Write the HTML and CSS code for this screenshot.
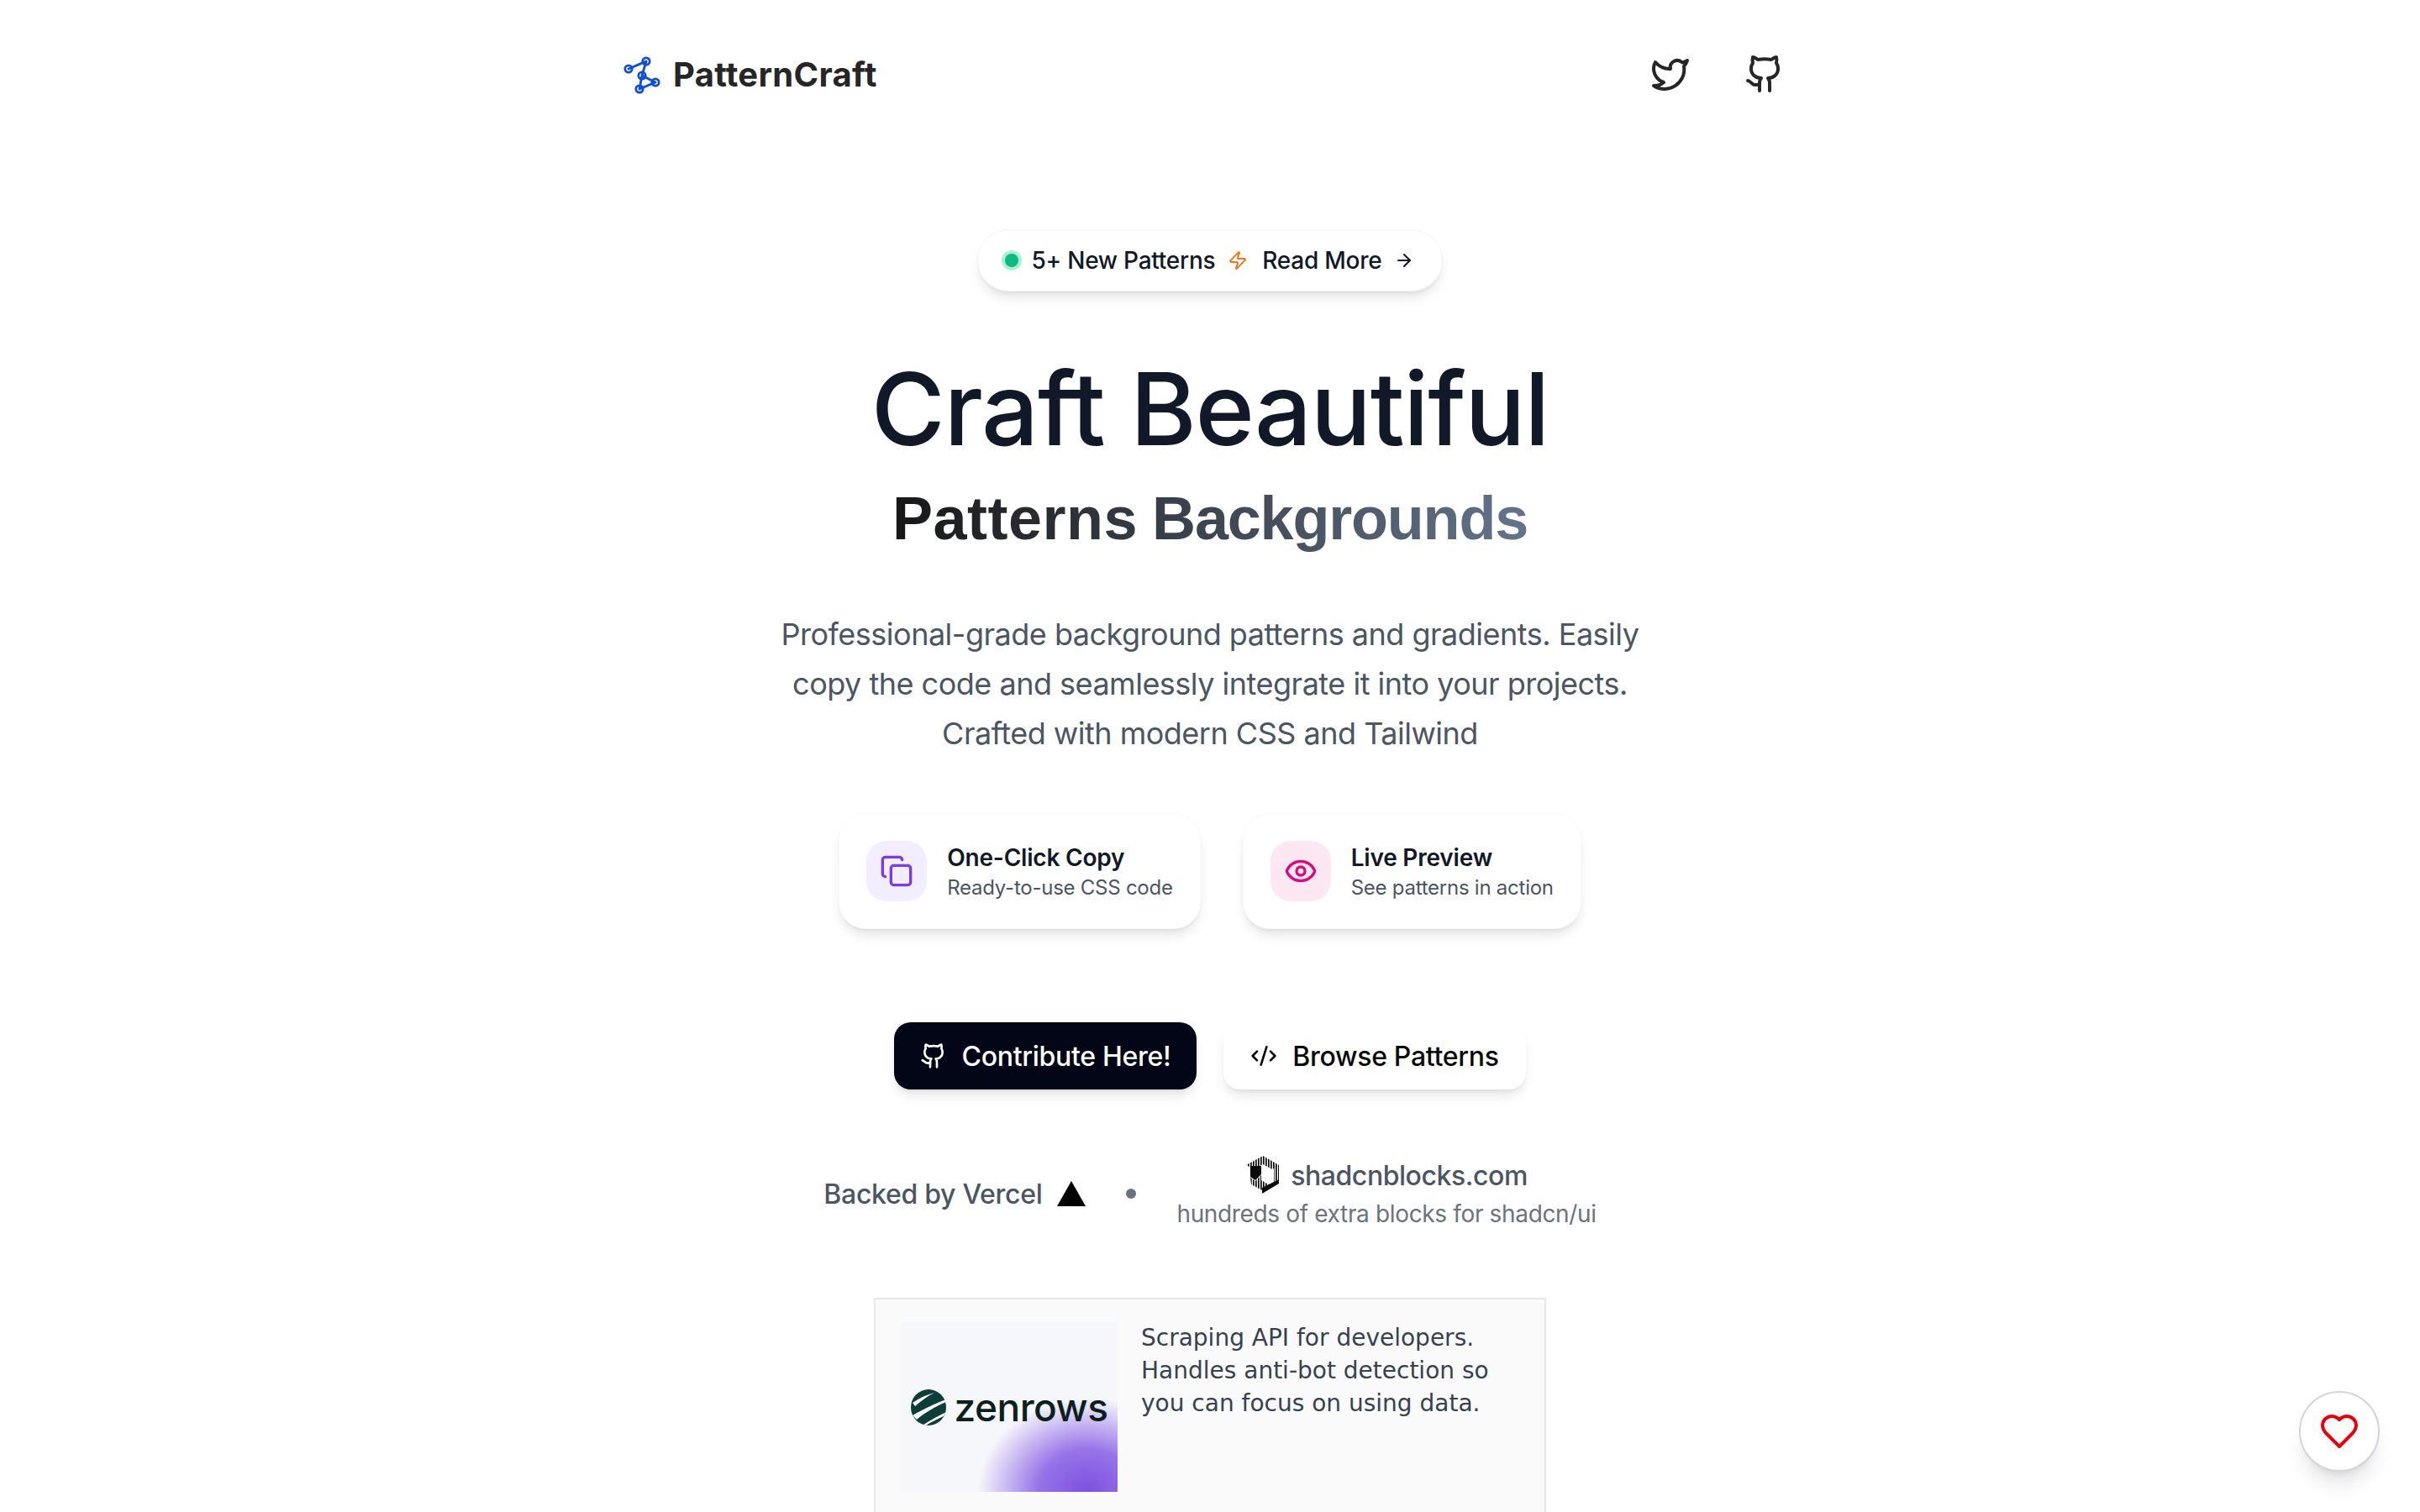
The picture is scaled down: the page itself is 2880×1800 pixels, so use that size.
FILE: index.html
```html
<!DOCTYPE html>
<html lang="en">
<head>
<meta charset="utf-8">
<title>PatternCraft</title>
<link rel="stylesheet" href="styles.css">
</head>
<body>
<header class="header">
  <a class="brand">
    <svg class="brand-icon" viewBox="0 0 48 48">
      <path d="M8 18 29 9 24 26 40 34 21 42 24 26"/>
      <circle cx="8" cy="18" r="4.200"/><circle cx="29" cy="9" r="4.200"/><circle cx="24" cy="26" r="4.200"/><circle cx="40" cy="34" r="4.200"/><circle cx="21" cy="42" r="4.200"/>
    </svg>
    <span class="brand-name">PatternCraft</span>
  </a>
  <nav class="social">
    <svg class="social-icon" viewBox="0 0 24 24"><path d="M22 4s-.7 2.1-2 3.4c1.600 10-9.400 17.300-18 11.600 2.200.1 4.400-.6 6-2C3 15.500.5 9.600 3 5c2.200 2.600 5.600 4.100 9 4-.9-4.200 4-6.600 7-3.800 1.100 0 3-1.200 3-1.200z"/></svg>
    <svg class="social-icon" viewBox="0 0 24 24"><path d="M15 22v-4a4.800 4.800 0 0 0-1-3.500c3 0 6-2 6-5.500.08-1.250-.27-2.480-1-3.500.28-1.150.28-2.350 0-3.500 0 0-1 0-3 1.500-2.640-.5-5.360-.5-8 0C6 2 5 2 5 2c-.3 1.150-.3 2.350 0 3.500A5.403 5.403 0 0 0 4 9c0 3.500 3 5.500 6 5.500-.39.49-.68 1.050-.85 1.650-.17.6-.22 1.230-.15 1.850v4"/><path d="M9 18c-4.510 2-5-2-7-2"/></svg>
  </nav>
</header>
<main class="main">
  <div class="pill">
    <span class="pill-dot"></span>
    <span>5+ New Patterns</span>
    <svg class="pill-zap" viewBox="0 0 24 24"><path d="M4 14a1 1 0 0 1-.78-1.630l9.900-10.200a.5.5 0 0 1 .86.46l-1.920 6.020A1 1 0 0 0 13 10h7a1 1 0 0 1 .78 1.630l-9.900 10.200a.5.5 0 0 1-.86-.46l1.920-6.020A1 1 0 0 0 11 14z"/></svg>
    <span class="pill-more">Read More</span>
    <svg class="pill-arrow" viewBox="0 0 24 24"><path d="M5 12h14"/><path d="m12 5 7 7-7 7"/></svg>
  </div>
  <h1 class="title">Craft Beautiful</h1>
  <h2 class="subtitle"><span class="subtitle-first">Patterns</span> <span class="subtitle-second">Backgrounds</span></h2>
  <p class="lead">Professional-grade background patterns and gradients. Easily<br>copy the code and seamlessly integrate it into your projects.<br>Crafted with modern CSS and Tailwind</p>
  <div class="features">
    <div class="feature">
      <span class="feature-icon feature-icon-violet">
        <svg viewBox="0 0 24 24"><rect width="14" height="14" x="8" y="8" rx="2"/><path d="M4 16c-1.100 0-2-.9-2-2V4c0-1.100.9-2 2-2h10c1.100 0 2 .9 2 2"/></svg>
      </span>
      <div class="feature-text">
        <div class="feature-title">One-Click Copy</div>
        <div class="feature-sub">Ready-to-use CSS code</div>
      </div>
    </div>
    <div class="feature">
      <span class="feature-icon feature-icon-pink">
        <svg viewBox="0 0 24 24"><path d="M2.062 12.348a1 1 0 0 1 0-.696 10.750 10.750 0 0 1 19.876 0 1 1 0 0 1 0 .696 10.750 10.750 0 0 1-19.876 0"/><circle cx="12" cy="12" r="3"/></svg>
      </span>
      <div class="feature-text">
        <div class="feature-title">Live Preview</div>
        <div class="feature-sub">See patterns in action</div>
      </div>
    </div>
  </div>
  <div class="actions">
    <a class="btn btn-dark">
      <svg viewBox="0 0 24 24"><path d="M15 22v-4a4.800 4.800 0 0 0-1-3.500c3 0 6-2 6-5.500.08-1.250-.27-2.480-1-3.500.28-1.150.28-2.350 0-3.500 0 0-1 0-3 1.500-2.640-.5-5.360-.5-8 0C6 2 5 2 5 2c-.3 1.150-.3 2.350 0 3.500A5.403 5.403 0 0 0 4 9c0 3.500 3 5.500 6 5.500-.39.49-.68 1.050-.85 1.650-.17.6-.22 1.230-.15 1.850v4"/><path d="M9 18c-4.510 2-5-2-7-2"/></svg>
      Contribute Here!
    </a>
    <a class="btn btn-light">
      <svg viewBox="0 0 24 24"><path d="m18 16 4-4-4-4"/><path d="m6 8-4 4 4 4"/><path d="m14.500 4-5 16"/></svg>
      Browse Patterns
    </a>
  </div>
  <div class="backers">
    <div class="vercel">
      <span>Backed by Vercel</span>
      <svg class="vercel-mark" viewBox="0 0 34 30"><path d="M17 0 34 30H0z"/></svg>
    </div>
    <span class="backer-dot"></span>
    <div class="blocks">
      <div class="blocks-top">
        <svg class="blocks-mark" viewBox="0 0 42 48">
          <defs><pattern id="stripes" width="3" height="3" patternUnits="userSpaceOnUse"><rect width="1.700" height="3" fill="#0a0a0a"/></pattern></defs>
          <path d="M1 12 21 1 40 12 32 17 21 11 10 17Z" fill="url(#stripes)"/>
          <path d="M6 13 19 13V23L12 30 6 26Z" fill="#0a0a0a"/>
          <path d="M6 27 12 31 19 24V30L31 37 20 42 7 35Z" fill="url(#stripes)"/>
          <path d="M34 14 40 12V32L34 35Z" fill="url(#stripes)"/>
          <path d="M20 46 40 34V29L30 34 20 39Z" fill="#0a0a0a"/>
        </svg>
        <span class="blocks-name">shadcnblocks.com</span>
      </div>
      <div class="blocks-sub">hundreds of extra blocks for shadcn/ui</div>
    </div>
  </div>
  <aside class="sponsor">
    <div class="sponsor-image">
      <svg class="zen-mark" viewBox="0 0 42 43">
        <ellipse cx="21" cy="21.500" rx="21" ry="21.500" fill="#0d3d38"/>
        <path d="M2 16C10 10 20 6 28 4 20 8 12 14 5 20Z M2 31C14 24 30 16 42 12V15C30 20 16 28 7 36Z M15 42C24 36 34 31 42 27L39 32C32 35 24 39 18 43Z" fill="#f6f7fa"/>
      </svg>
      <span class="zen-name">zenrows</span>
    </div>
    <p class="sponsor-text">Scraping API for developers. Handles anti-bot detection so you can focus on using data.</p>
  </aside>
</main>
<button class="like" aria-label="Like">
  <svg viewBox="0 0 24 24"><path d="M19 14c1.490-1.460 3-3.210 3-5.500A5.500 5.500 0 0 0 16.500 3c-1.760 0-3 .5-4.500 2-1.500-1.500-2.740-2-4.500-2A5.500 5.500 0 0 0 2 8.500c0 2.300 1.500 4.050 3 5.500l7 7Z"/></svg>
</button>
</body>
</html>
```
FILE: styles.css
```css
* { box-sizing: border-box; }
html, body { margin: 0; padding: 0; }
body {
  background: #fff;
  color: #111827;
  font-family: Inter, "Liberation Sans", sans-serif;
  height: 1800px;
  overflow: hidden;
}
svg { fill: none; stroke: currentColor; stroke-width: 2; stroke-linecap: round; stroke-linejoin: round; flex: none; }

.header {
  width: 1440px;
  height: 176px;
  margin: 0 auto;
  padding: 0 36px 0 20px;
  display: flex;
  align-items: center;
  justify-content: space-between;
}
.brand { display: flex; align-items: center; gap: 13px; }
.brand-icon { width: 48px; height: 48px; stroke: #0f4fd0; stroke-width: 2.8; }
.brand-name { font-size: 40px; font-weight: 700; letter-spacing: 0.3px; color: #262626; }
.social { display: flex; gap: 64px; }
.social-icon { width: 48px; height: 48px; stroke: #262626; }

.main { display: flex; flex-direction: column; align-items: center; }

.pill {
  margin-top: 97px;
  height: 74px;
  padding: 0 33px 0 28px;
  display: flex;
  align-items: center;
  gap: 15px;
  border-radius: 37px;
  border: 1px solid #f3f4f6;
  background: #fff;
  font-size: 28px;
  font-weight: 500;
  letter-spacing: -0.25px;
  color: #111827;
  box-shadow: 0 10px 15px -3px rgba(0,0,0,.1), 0 4px 6px -4px rgba(0,0,0,.1);
}
.pill-dot {
  width: 16px;
  height: 16px;
  margin: 0 1px 0 4px;
  border-radius: 50%;
  background: #10b981;
  box-shadow: 0 0 0 4px #a7f3d0;
}
.pill-more { margin-left: 2px; }
.pill-zap { width: 24px; height: 24px; stroke: #f97316; }
.pill-arrow { width: 24px; height: 24px; stroke: #111827; }

.title {
  margin: 65px 0 0;
  font-size: 120px;
  line-height: 1.25;
  font-weight: 500;
  letter-spacing: -1.3px;
  color: #111827;
}
.subtitle {
  margin: 10px 0 0;
  font-family: "Liberation Sans", Arial, sans-serif;
  font-size: 72px;
  line-height: 1.25;
  font-weight: 700;
  word-spacing: -3px;
  background: linear-gradient(90deg, #171717, #64748b);
  -webkit-background-clip: text;
  background-clip: text;
  color: transparent;
}
.subtitle-first { letter-spacing: 0.5px; }
.subtitle-second { letter-spacing: -1.2px; }
.lead {
  margin: 64px 0 0;
  font-size: 36px;
  line-height: 59px;
  letter-spacing: -0.5px;
  color: #4b5563;
  text-align: center;
}

.features { margin-top: 65px; display: flex; gap: 50px; }
.feature {
  height: 138px;
  padding: 0 32px;
  display: flex;
  align-items: center;
  gap: 24px;
  background: #fff;
  border: 1px solid #f9fafb;
  border-radius: 32px;
  box-shadow: 0 10px 15px -3px rgba(0,0,0,.1), 0 4px 6px -4px rgba(0,0,0,.1);
}
.feature-icon {
  width: 72px;
  height: 72px;
  border-radius: 24px;
  display: flex;
  align-items: center;
  justify-content: center;
}
.feature-icon svg { width: 40px; height: 40px; }
.feature-icon-violet { background: #f3eeff; color: #7c3aed; }
.feature-icon-pink { background: #fce7f3; color: #db0a7b; }
.feature-title { font-size: 28px; line-height: 40px; font-weight: 600; letter-spacing: -0.2px; color: #111827; }
.feature-sub { font-size: 24px; line-height: 32px; letter-spacing: -0.25px; color: #4b5563; }

.actions { margin-top: 111px; display: flex; gap: 32px; }
.btn {
  width: 360px;
  height: 80px;
  display: flex;
  align-items: center;
  justify-content: center;
  gap: 18px;
  border-radius: 20px;
  font-size: 32px;
  font-weight: 500;
  letter-spacing: -0.3px;
  box-shadow: 0 10px 15px -3px rgba(0,0,0,.1), 0 4px 6px -4px rgba(0,0,0,.1);
}
.btn svg { width: 32px; height: 32px; }
.btn-dark { background: #020617; color: #fff; }
.btn-light { background: #fff; color: #0a0a0a; }

.backers { margin-top: 78px; display: flex; align-items: center; gap: 48px; }
.vercel { display: flex; align-items: center; gap: 18px; font-size: 32px; font-weight: 500; letter-spacing: -0.3px; color: #4b5563; }
.vercel-mark { width: 34px; height: 30px; fill: #000; stroke: none; }
.backer-dot { width: 12px; height: 12px; border-radius: 50%; background: #6b7280; }
.blocks { display: flex; flex-direction: column; align-items: center; }
.blocks-top { display: flex; align-items: center; gap: 12px; font-size: 32px; font-weight: 500; letter-spacing: -0.45px; color: #4b5563; }
.blocks-mark { width: 42px; height: 48px; stroke: none; }
.blocks-sub { font-size: 28px; line-height: 44px; letter-spacing: -0.35px; color: #6b7280; }

.sponsor {
  margin-top: 78px;
  width: 800px;
  height: 258px;
  padding: 27px 28px 28px;
  display: flex;
  gap: 28px;
  background: #fafafa;
  border: 2px solid #e5e7eb;
  border-bottom: 0;
}
.sponsor-image {
  width: 258px;
  height: 202px;
  margin-left: 2px;
  flex: none;
  display: flex;
  align-items: center;
  justify-content: center;
  gap: 10px;
  background:
    radial-gradient(ellipse 130px 112px at 86% 100%, #7c4fe2 0%, rgba(124,79,226,.78) 45%, rgba(124,79,226,0) 100%),
    #f6f7fa;
}
.zen-mark { width: 42px; height: 43px; stroke: none; }
.zen-name { font-size: 46px; font-weight: 500; letter-spacing: -0.5px; color: #0b1f1d; }
.sponsor-text {
  margin: -1px 0 0;
  font-family: "DejaVu Sans", sans-serif;
  font-size: 28px;
  line-height: 39px;
  color: #374151;
}

.like {
  position: fixed;
  right: 48px;
  bottom: 48px;
  width: 96px;
  height: 96px;
  padding: 0;
  border: 2px solid #d1d5db;
  border-radius: 50%;
  background: #fff;
  display: flex;
  align-items: center;
  justify-content: center;
  box-shadow: 0 20px 25px -5px rgba(0,0,0,.1), 0 8px 10px -6px rgba(0,0,0,.1);
}
.like svg { width: 48px; height: 48px; stroke: #e7000b; }
```
